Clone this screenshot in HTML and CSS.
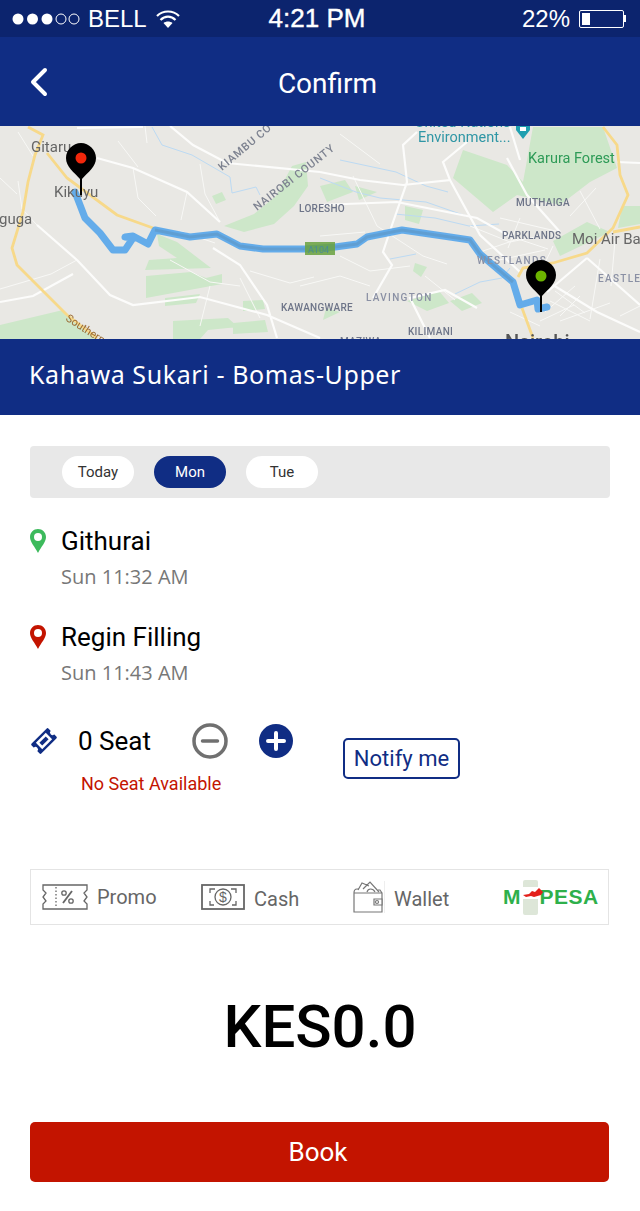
FILE: index.html
```html
<!DOCTYPE html>
<html lang="en">
<head>
  <meta charset="UTF-8">
  <title>Confirm</title>
  <meta name="viewport" content="width=device-width, initial-scale=1.0">
  <link rel="stylesheet" href="styles.css">
</head>
<body>
  <div class="status-bar">
    <div class="status-left">
      <svg class="signal" width="68" height="14" viewBox="0 0 68 14">
        <circle cx="6" cy="7" r="5.500" fill="#fff"/>
        <circle cx="20.500" cy="7" r="5.500" fill="#fff"/>
        <circle cx="35" cy="7" r="5.500" fill="#fff"/>
        <circle cx="49" cy="7" r="5" fill="none" stroke="#fff"/>
        <circle cx="62" cy="7" r="5" fill="none" stroke="#fff"/>
      </svg>
      <span class="carrier">BELL</span>
      <svg class="wifi" width="24" height="20" viewBox="0 0 24 20">
        <path d="M1 7C7 1 17 1 23 7" fill="none" stroke="#fff" stroke-width="2.200"/>
        <path d="M4.500 11C9 6.500 15 6.500 19.500 11" fill="none" stroke="#fff" stroke-width="2.200"/>
        <path d="M7.500 14C10 12 14 12 16.500 14L12 19z" fill="#fff"/>
      </svg>
    </div>
    <div class="status-time">4:21 PM</div>
    <div class="status-right">
      <span>22%</span>
      <div class="battery"><div class="battery-level"></div></div>
      <div class="battery-tip"></div>
    </div>
  </div>

  <header class="top-bar">
    <svg class="back" width="20" height="30" viewBox="0 0 20 30">
      <path d="M16 3L4 15l12 12" fill="none" stroke="#fff" stroke-width="4" stroke-linecap="round" stroke-linejoin="round"/>
    </svg>
    <h1>Confirm</h1>
  </header>

  <svg class="map" width="640" height="213" viewBox="0 0 640 213">
    <rect width="640" height="213" fill="#e9e8e4"/>
    <!-- parks -->
    <g fill="#cde7c9">
      <path d="M0 199l63-15 34 29H0z"/>
      <path d="M157 108l20 8 34 26-66 2 4-10 28-2-18-12zM146 150l45-4 15 6 16-4v10l-76 14zM165 172l35-4-4 9-31 3z"/>
      <path d="M243 175l20-1 2 9-22 2zM173 195l55-3 10 9-30 3-8 9h-27zM233 197l32-3 3 12-35 2z"/>
      <path d="M224 100l30-12 22-18 16-30 14-4 2 24-14 20-20 18-30 8z"/>
      <path d="M463 24l-10 28 40 34 24-17 43 10 30-23 27-14-14-41h-70l-10 55-16-17z"/>
      <path d="M587 96l23 10-50 24-7-15zM622 80h18v18l-22 4zM212 70l10-4 4 8-10 4zM320 60l25-6 8 12-26 10zM355 60l22 6-18 8z"/>
      <path d="M407 175l32-10 10 12-22 8zM326 182l14 4-17 8zM415 137l12 4-6 10-8-6zM405 80l18 4-4 14-14-4zM450 175l22-8 10 10-20 8z"/>
    </g>
    <!-- water -->
    <g fill="none" stroke="#bcdaf3" stroke-width="1">
      <path d="M152 1l10 18 30 10 38 22 2 16 24-6 4 8"/>
      <path d="M320 52l36 14 24 6 46 4 40 14M340 34l56 12 30 14 22 6"/>
      <path d="M395 88l40 4 34 8 30-2M390 133l26-5M455 168l25-12 22-4 8-10"/>
    </g>
    <!-- minor roads -->
    <g fill="none" stroke="#f8f8f6" stroke-width="1">
      <path d="M18 6l15 24M0 52l17 16M37 99l-15-16-4-28M77 134l-26 14-51 15"/>
      <path d="M133 42l5 30 18 18M187 66l-6 28M145 0l2 17M118 15l20 26M220 96l-15-28-5-30"/>
      <path d="M180 105l35 12M170 134l40 22 30 4M250 145l40 12 24-6M240 152l20 40M210 160l-10 40"/>
      <path d="M353 50l24 50 46 30 24 8M320 110l45-4M340 130l30 15 40-5M300 160l40-10 30 10M425 150l30 24"/>
      <path d="M340 8l40 30M470 100l40 16 30-6M483 125l35-12 30 10M500 92l60 14M490 136l55-12"/>
      <path d="M553 120l-16 34M520 92l-12 30M570 90l26-28M580 65l20 38M615 115l-4 45M600 133l-10 60M560 195l50-18M545 186l30-26M620 190l20-10M510 186l30 14"/>
      <path d="M550 175l40 20M555 165l30 22M540 195l34-16M580 170l-20 20"/>
    </g>
    <g fill="none" stroke="#fcfcfb" stroke-width="2.200">
      <path d="M77 134l33 35 23 10 67-8 67 18 53 23M37 99l40 35M213 122l27 17 27 40 10 33"/>
      <path d="M97 32l36 10 54 24 33 30M170 0l23 19 34 18 93 9M77 2l66-1"/>
      <path d="M320 46l40 8 43 5 47-5-7-18 24-20M417 6l-14 13 4 37-15 43-9 27 9 13-19 33M450 54l30 55 40 37M507 32l20 37 33 37"/>
      <path d="M320 79l77-3 80 16 36 20M553 159l44 27 43 20M587 132l-40 34M587 132l53 47M640 37l-23-1M430 212l-20-40 35-8 32 18M510 1l10 33"/>
      <path d="M0 176l33-6 40-22"/>
    </g>
    <!-- highways -->
    <g fill="none" stroke="#f7d98a" stroke-width="2.800">
      <path d="M28 1l15 8-8 20-7 27-5 30-11 36 5 17 23 23 27 27 30 23"/>
      <path d="M47 27l20 25 50 37 36 13"/>
      <path d="M603 1l14 18 3 30 8 20-15 33-26 25-34 10-30 5-5 9M613 106l27-5M522 182l11 30"/>
    </g>
    <!-- route -->
    <polyline points="75,66 85,92 100,107 113,124 125,124 133,112 125,111 133,110 148,118 155,104 190,111 217,108 240,120 263,123 305,123 335,121 357,118 367,111 402,104 450,111 470,114 480,128 513,156 520,179 537,174 538,183 547,181" fill="none" stroke="#55a5ea" stroke-width="7" stroke-linejoin="round" stroke-linecap="round" opacity="0.9"/>
    <polyline points="155,104 190,111 217,108 240,120 263,123 305,123" fill="none" stroke="#5b8fb5" stroke-width="3" opacity="0.45"/>
    <polyline points="335,121 357,118 367,111 402,104 450,111 470,114 480,128 513,156" fill="none" stroke="#5b8fb5" stroke-width="3" opacity="0.45"/>
    <rect x="305" y="116" width="30" height="13" fill="#68a13e" opacity="0.85"/>
    <text class="shield" x="308" y="127">A104</text>
    <!-- labels -->
    <text class="place" x="31" y="26">Gitaru</text>
    <text class="place" x="54" y="71">Kikuyu</text>
    <text class="place" x="-1" y="98">guga</text>
    <text class="place" x="572" y="118">Moi Air Ba</text>
    <text class="forest" x="528" y="37">Karura Forest</text>
    <text class="env" x="418" y="16">Environment...</text>
    <text class="env" x="415" y="1">United Nations</text>
    <path d="M516 0h14v4l-7 9-7-9z" fill="#1f9fb0"/>
    <rect x="520" y="1" width="6" height="4" fill="#fff"/>
    <text class="road" transform="translate(65 194) rotate(33)">Southern</text>
    <text class="area rot" transform="translate(222 45) rotate(-40)">KIAMBU CO</text>
    <text class="area rot" transform="translate(257 85) rotate(-38)">NAIROBI COUNTY</text>
    <text class="area" x="299" y="86">LORESHO</text>
    <text class="area" x="516" y="80">MUTHAIGA</text>
    <text class="area" x="502" y="113">PARKLANDS</text>
    <text class="area wide" x="477" y="138">WESTLANDS</text>
    <text class="area wide" x="598" y="156">EASTLE</text>
    <text class="area wide" x="366" y="175">LAVINGTON</text>
    <text class="area" x="281" y="185">KAWANGWARE</text>
    <text class="area" x="408" y="209">KILIMANI</text>
    <text class="area" x="340" y="219">MAZIWA</text>
    <text class="city" x="505" y="223">Nairobi</text>
    <!-- pins -->
    <path d="M81 17c-8 0-15 7-15 15 0 9 8 14 14 21v16h2V53c6-7 14-12 14-21 0-8-7-15-15-15z" fill="#000"/>
    <circle cx="81" cy="32" r="5.500" fill="#f1270b"/>
    <path d="M541 134c-8 0-15 7-15 15 0 9 8 14 14 21v16h2v-16c6-7 14-12 14-21 0-8-7-15-15-15z" fill="#000"/>
    <circle cx="541" cy="150" r="5.500" fill="#6cb300"/>
  </svg>

  <div class="route-title">Kahawa Sukari - Bomas-Upper</div>

  <main class="content">
    <div class="days">
      <div class="day">Today</div>
      <div class="day active">Mon</div>
      <div class="day">Tue</div>
    </div>

    <div class="stop">
      <svg class="stop-pin" width="16" height="24" viewBox="0 0 16 24">
        <path d="M8 0C3.600 0 0 3.500 0 8c0 5 5 10 8 16 3-6 8-11 8-16 0-4.500-3.600-8-8-8z" fill="#3dba5c"/>
        <circle cx="8" cy="8" r="4" fill="#fff"/>
      </svg>
      <div>
        <div class="stop-name">Githurai</div>
        <div class="stop-time">Sun 11:32 AM</div>
      </div>
    </div>

    <div class="stop">
      <svg class="stop-pin" width="16" height="24" viewBox="0 0 16 24">
        <path d="M8 0C3.600 0 0 3.500 0 8c0 5 5 10 8 16 3-6 8-11 8-16 0-4.500-3.600-8-8-8z" fill="#c31400"/>
        <circle cx="8" cy="8" r="4" fill="#fff"/>
      </svg>
      <div>
        <div class="stop-name">Regin Filling</div>
        <div class="stop-time">Sun 11:43 AM</div>
      </div>
    </div>

    <div class="seats">
      <div class="seat-col">
        <div class="seat-row">
          <svg class="ticket" width="28" height="28" viewBox="0 0 28 28">
            <g transform="rotate(-45 14 14)">
              <rect x="2" y="7" width="24" height="14" rx="1.500" fill="#102d84"/>
              <circle cx="2" cy="14" r="2.500" fill="#fff"/>
              <circle cx="26" cy="14" r="2.500" fill="#fff"/>
              <rect x="7" y="9.500" width="14" height="9" fill="#fff"/>
              <rect x="9.500" y="12" width="9" height="4" fill="#102d84"/>
            </g>
          </svg>
          <span class="seat-count">0 Seat</span>
          <svg class="stepper-minus" width="36" height="36" viewBox="0 0 36 36">
            <circle cx="18" cy="18" r="16" fill="#fff" stroke="#707070" stroke-width="3.500"/>
            <path d="M10.500 18h15" stroke="#707070" stroke-width="3.500" stroke-linecap="round"/>
          </svg>
          <svg class="stepper-plus" width="34" height="34" viewBox="0 0 34 34">
            <circle cx="17" cy="17" r="17" fill="#102d84"/>
            <path d="M17 9v16M9 17h16" stroke="#fff" stroke-width="4" stroke-linecap="round"/>
          </svg>
        </div>
        <div class="no-seat">No Seat Available</div>
      </div>
      <button class="notify">Notify me</button>
    </div>

    <div class="payments">
      <div class="pay pay-promo">
        <svg width="46" height="26" viewBox="0 0 46 26" fill="none" stroke="#666" stroke-width="1.300">
          <path d="M1 1h44v5l-3 3 3 4-3 4 3 3v5H1v-5l3-3-3-4 3-4-3-3z"/>
          <path d="M14 3v20" stroke-dasharray="1.500 2"/>
          <path d="M21 19l9-12" stroke-width="1.800"/>
          <circle cx="22" cy="9" r="2.200"/>
          <circle cx="29" cy="17" r="2.200"/>
        </svg>
        <span>Promo</span>
      </div>
      <div class="pay pay-cash">
        <svg width="44" height="26" viewBox="0 0 44 26" fill="none" stroke="#666" stroke-width="1.300">
          <rect x="1" y="1" width="42" height="24" stroke-width="1.800"/>
          <circle cx="22" cy="13" r="8"/>
          <path d="M9 9V5h5M35 9V5h-5M9 17v4h4M35 17v4h-4"/>
          <text class="dollar" x="22" y="18">$</text>
        </svg>
        <span>Cash</span>
      </div>
      <div class="pay pay-wallet">
        <svg width="32" height="32" viewBox="0 0 32 32" fill="none" stroke="#777" stroke-width="1.200">
          <path d="M1 12h28v19H1zM1 12c0-2 1-4 3-4h2M29 12l-2-3h-2"/>
          <path d="M5 9l4-7 7 3M10 8l7-7 9 10M14 11c1-4 6-4 8 0"/>
          <path d="M21 18h8v6h-8z" fill="#fff"/>
          <circle cx="24" cy="21" r="1.500"/>
          <path d="M31.500 0v32" stroke="#eee" stroke-width="1"/>
        </svg>
        <span>Wallet</span>
      </div>
      <div class="mpesa">
        <div class="mpesa-phone"></div>
        <svg class="mpesa-flag" width="20" height="10" viewBox="0 0 20 10">
          <path d="M0 7l6-1 3-3 3 1 4-4 4 4-2 3-7 2-3-1-5 1z" fill="#e3201b"/>
        </svg>
        <span class="mpesa-m">M</span><span class="mpesa-gap"></span><span class="mpesa-word">PESA</span>
      </div>
    </div>

    <div class="total">KES0.0</div>

    <button class="book">Book</button>
  </main>
</body>
</html>
```

FILE: styles.css
```css
body {
  margin: 0;
  width: 640px;
  background: #fff;
  font-family: Roboto, sans-serif;
  color: #000;
  overflow-x: hidden;
}

/* status bar */
.status-bar {
  height: 37px;
  background: #0c246e;
  color: #fff;
  display: flex;
  align-items: center;
  justify-content: space-between;
  font-family: "Liberation Sans", sans-serif;
  font-size: 24px;
  padding: 0 14px 0 12px;
  box-sizing: border-box;
  position: relative;
}
.status-left {
  display: flex;
  align-items: center;
}
.signal {
  margin-right: 8px;
}
.carrier {
  margin-right: 9px;
}
.status-time {
  position: absolute;
  left: 247px;
  width: 140px;
  text-align: center;
  font-size: 26px;
  -webkit-text-stroke: 0.4px #fff;
}
.status-right {
  display: flex;
  align-items: center;
}
.battery {
  width: 45px;
  height: 18px;
  margin-left: 9px;
  border: 1px solid #fff;
  border-radius: 2px;
  padding: 2px;
  box-sizing: border-box;
}
.battery-level {
  width: 8px;
  height: 100%;
  background: #fff;
}
.battery-tip {
  width: 2px;
  height: 7px;
  background: #fff;
}

/* header */
.top-bar {
  height: 89px;
  background: #102d84;
  display: flex;
  align-items: center;
  justify-content: center;
  position: relative;
}
.top-bar h1 {
  margin: 4px -15px 0 0;
  font-size: 28px;
  font-weight: 400;
  color: #fff;
}
.back {
  position: absolute;
  left: 29px;
  top: 30px;
}

/* map */
.map {
  display: block;
  filter: blur(0.45px);
}
.map text {
  font-family: Roboto, sans-serif;
}
.map .place {
  font-size: 15px;
  fill: #666;
}
.map .forest {
  font-size: 14.500px;
  fill: #2e9b57;
}
.map .env {
  font-size: 14.500px;
  fill: #2f96a5;
}
.map .road {
  font-size: 11px;
  fill: #9a6a32;
}
.map .area {
  font-size: 10px;
  font-weight: 500;
  fill: #6d7488;
  letter-spacing: 0.3px;
}
.map .wide {
  letter-spacing: 1.300px;
  fill: #8a90a4;
}
.map .rot {
  font-size: 11px;
  fill: #7d8290;
  letter-spacing: 0.8px;
}
.map .city {
  font-size: 20px;
  font-weight: 500;
  fill: #555;
}
.map .shield {
  font-size: 9px;
  fill: #4b8b96;
}

/* route name */
.route-title {
  height: 76px;
  background: #102d84;
  color: #fff;
  display: flex;
  align-items: center;
  padding: 0 0 6px 29px;
  box-sizing: border-box;
  font-family: "Noto Sans", sans-serif;
  font-size: 25px;
  letter-spacing: 0.6px;
}

.content {
  padding: 31px 30px 0;
}

/* day tabs */
.days {
  height: 52px;
  background: #e8e8e8;
  border-radius: 4px;
  display: flex;
  align-items: center;
  gap: 20px;
  padding-left: 32px;
}
.day {
  width: 72px;
  height: 32px;
  border-radius: 16px;
  background: #fff;
  color: #333;
  font-size: 15px;
  display: flex;
  align-items: center;
  justify-content: center;
}
.day.active {
  background: #102d84;
  color: #fff;
}

/* stops */
.stop {
  display: flex;
  gap: 15px;
  margin-top: 26px;
  height: 69px;
}
.stop + .stop {
  margin-top: 27px;
}
.stop-pin {
  margin-top: 5px;
}
.stop-name {
  font-size: 26px;
  line-height: 34px;
}
.stop-time {
  font-family: "Open Sans", sans-serif;
  font-size: 20px;
  line-height: 28px;
  margin-top: 5px;
  color: #777;
}

/* seats */
.seats {
  display: flex;
  margin-top: 32px;
}
.seat-col {
  width: 313px;
}
.seat-row {
  display: flex;
  align-items: center;
  height: 40px;
}
.ticket {
  margin-right: 20px;
}
.seat-count {
  font-size: 26px;
  width: 112px;
}
.stepper-minus {
  margin-left: 2px;
}
.stepper-plus {
  margin-left: 31px;
}
.no-seat {
  font-size: 18px;
  color: #c31400;
  margin: 12px 0 0 51px;
}
.notify {
  align-self: flex-start;
  margin-top: 17px;
  width: 117px;
  height: 41px;
  padding: 0;
  background: #fff;
  border: 2px solid #102d84;
  border-radius: 5px;
  color: #102d84;
  font-family: Roboto, sans-serif;
  font-size: 22px;
}

/* payment options */
.payments {
  height: 56px;
  margin-top: 75px;
  border: 1px solid #e4e4e4;
  box-sizing: border-box;
  width: 579px;
  display: flex;
  align-items: center;
  font-size: 20px;
  color: #666;
}
.pay {
  display: flex;
  align-items: center;
  gap: 9px;
}
.pay-promo {
  margin-left: 11px;
  width: 159px;
}
.pay-cash {
  width: 152px;
}
.pay-wallet {
  width: 150px;
}
.pay-cash span, .pay-wallet span {
  margin-top: 3px;
}
.dollar {
  font-family: "Liberation Sans", sans-serif;
  font-size: 14px;
  text-anchor: middle;
  fill: #666;
  stroke: none;
}
.mpesa {
  display: flex;
  align-items: center;
  font-family: "Liberation Sans", sans-serif;
  font-weight: bold;
  font-size: 21px;
  color: #2eb04b;
  position: relative;
}
.mpesa-gap {
  width: 19px;
}
.mpesa-word {
  letter-spacing: 0.5px;
}
.mpesa-phone {
  position: absolute;
  left: 20px;
  top: -5px;
  width: 15px;
  height: 35px;
  background: linear-gradient(#dde6d8 20%, #fff 20%, #fff 55%, #dde6d8 55%);
  border-radius: 2px;
}
.mpesa-flag {
  position: absolute;
  left: 20px;
  top: 3px;
}

/* total */
.total {
  margin-top: 62px;
  text-align: center;
  font-size: 60px;
  font-weight: 500;
  line-height: 80px;
}

.book {
  display: block;
  width: 579px;
  height: 60px;
  margin-top: 55px;
  padding: 0 3px 0 0;
  background: #c31400;
  border: none;
  border-radius: 5px;
  color: #fff;
  font-family: Roboto, sans-serif;
  font-size: 26px;
}
```
